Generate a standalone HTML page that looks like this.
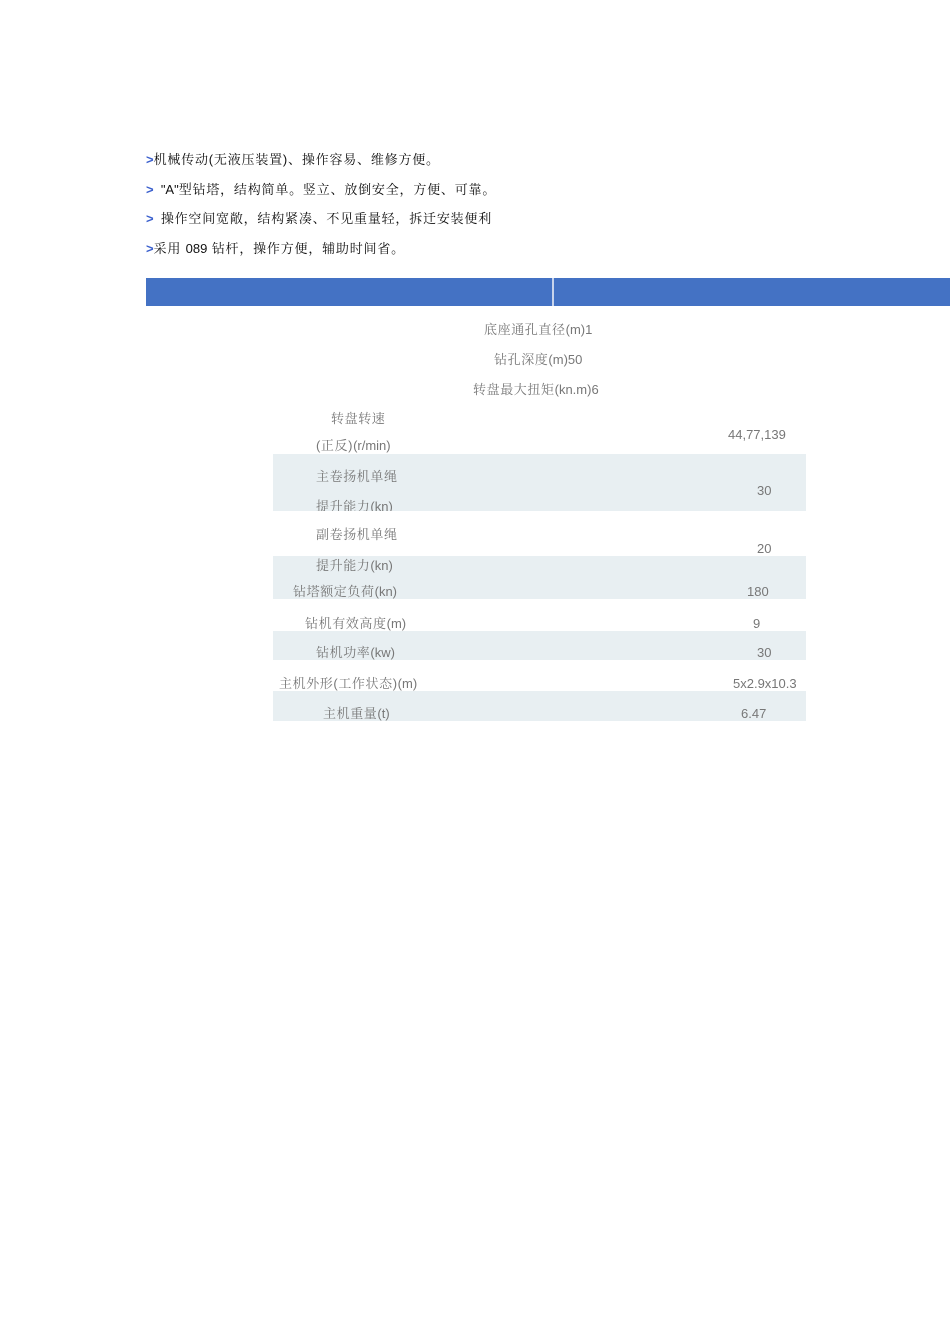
<!DOCTYPE html>
<html><head><meta charset="utf-8"><style>
body{margin:0;width:950px;height:1344px;background:#fff;position:relative;overflow:hidden;font-family:"Liberation Sans","Noto Serif CJK SC","Noto Sans CJK SC",serif;}
.t{position:absolute;font-size:13px;line-height:16px;white-space:nowrap;color:#111;letter-spacing:0.8px;}
.g{position:absolute;font-size:13px;line-height:16px;white-space:nowrap;color:#777;letter-spacing:0.6px;}
.g i,.t i{font-style:normal;letter-spacing:0;}
.b{color:#3a5fcd;font-weight:bold;letter-spacing:0;}
.r{position:absolute;left:273px;width:533px;background:#e8eff2;}
</style></head><body>
<div class="t" style="left:146px;top:152px"><span class="b">&gt;</span>机械传动(无液压装置)、操作容易、维修方便。</div>
<div class="t" style="left:146px;top:182px"><span class="b">&gt;</span><i>&nbsp; "A"</i>型钻塔，结构简单。竖立、放倒安全，方便、可靠。</div>
<div class="t" style="left:146px;top:211px"><span class="b">&gt;</span><i>&nbsp; </i>操作空间宽敞，结构紧凑、不见重量轻，拆迁安装便利</div>
<div class="t" style="left:146px;top:241px"><span class="b">&gt;</span>采用 <i>089</i> 钻杆，操作方便，辅助时间省。</div>
<div style="position:absolute;left:146px;top:278px;width:804px;height:28px;background:#4472c4"></div>
<div style="position:absolute;left:552px;top:278px;width:2px;height:28px;background:#c8d4ec"></div>
<div class="r" style="top:454px;height:57px"></div>
<div class="r" style="top:556px;height:43px"></div>
<div class="r" style="top:631px;height:29px"></div>
<div class="r" style="top:691px;height:30px"></div>
<div class="g" style="left:484px;top:322px">底座通孔直径<i>(m)1</i></div>
<div class="g" style="left:494px;top:352px">钻孔深度<i>(m)50</i></div>
<div class="g" style="left:473px;top:382px">转盘最大扭矩<i>(kn.m)6</i></div>
<div class="g" style="left:331px;top:411px">转盘转速</div>
<div class="g" style="left:316px;top:438px">(正反)<i>(r/min)</i></div>
<div class="g" style="left:728px;top:427px"><i>44,77,139</i></div>
<div class="g" style="left:316px;top:469px">主卷扬机单绳</div>
<div class="g" style="left:757px;top:483px"><i>30</i></div>
<div style="position:absolute;left:273px;top:498px;width:300px;height:13px;overflow:hidden"><div class="g" style="left:43px;top:1px">提升能力<i>(kn)</i></div></div>
<div class="g" style="left:316px;top:527px">副卷扬机单绳</div>
<div class="g" style="left:757px;top:541px"><i>20</i></div>
<div class="g" style="left:316px;top:558px">提升能力<i>(kn)</i></div>
<div class="g" style="left:293px;top:584px">钻塔额定负荷<i>(kn)</i></div>
<div class="g" style="left:747px;top:584px"><i>180</i></div>
<div class="g" style="left:305px;top:616px">钻机有效高度<i>(m)</i></div>
<div class="g" style="left:753px;top:616px"><i>9</i></div>
<div class="g" style="left:316px;top:645px">钻机功率<i>(kw)</i></div>
<div class="g" style="left:757px;top:645px"><i>30</i></div>
<div class="g" style="left:279px;top:676px">主机外形(工作状态)<i>(m)</i></div>
<div class="g" style="left:733px;top:676px"><i>5x2.9x10.3</i></div>
<div class="g" style="left:323px;top:706px">主机重量<i>(t)</i></div>
<div class="g" style="left:741px;top:706px"><i>6.47</i></div>
</body></html>
